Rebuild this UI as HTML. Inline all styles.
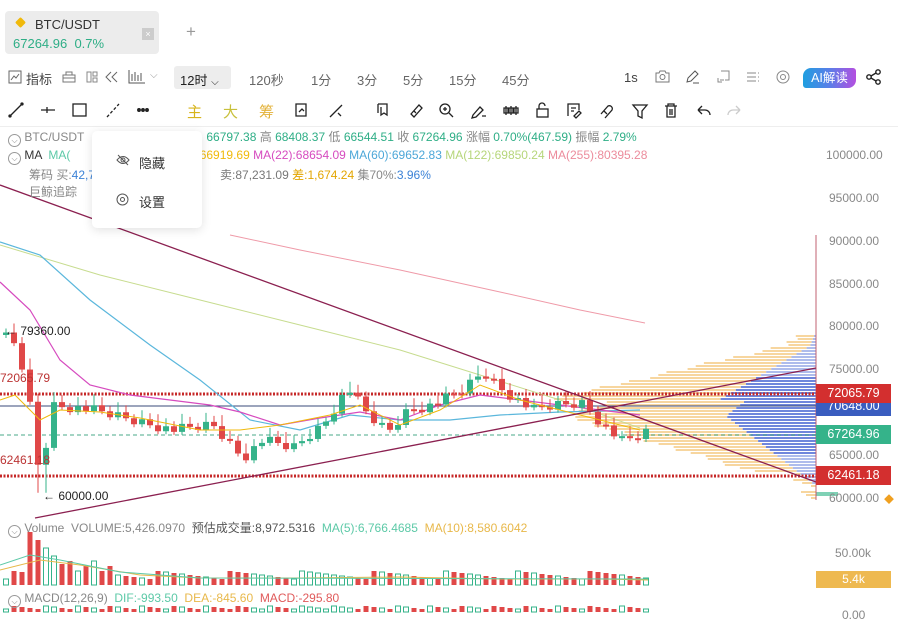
<!DOCTYPE html>
<html><head><meta charset="utf-8">
<style>
*{margin:0;padding:0;box-sizing:border-box}
body{width:898px;height:627px;overflow:hidden;background:#fff;font-family:"Liberation Sans","Noto Sans CJK SC",sans-serif;position:relative;color:#333}
.a{position:absolute;white-space:nowrap}
.tab{left:5px;top:11px;width:154px;height:43px;background:#ececec;border-radius:4px}
.t13{font-size:13px}
.g{color:#2eae86}.gr{color:#888}
.leg{font-size:12px;color:#888}
.lbl{position:absolute;left:816px;width:75px;height:19px;color:#fff;font-size:12.5px;line-height:19px;text-align:center}
.ax{position:absolute;left:826px;font-size:12px;color:#888}
.ci{display:inline-block;width:13px;height:13px;border:1px solid #999;border-radius:50%;vertical-align:-2px;font-size:8px;text-align:center;line-height:11px}
</style></head><body>
<div class="a tab"></div>
<div class="a" style="left:15px;top:17px;width:11px;height:11px;background:#f0b90b;transform:rotate(45deg) scale(.7);border-radius:2px"></div>
<div class="a t13" style="left:35px;top:17px;color:#333">BTC/USDT</div>
<div class="a t13 g" style="left:13px;top:36px">67264.96&nbsp; 0.7%</div>
<div class="a" style="left:142px;top:28px;width:12px;height:12px;background:#ccc;color:#fff;font-size:9px;text-align:center;line-height:12px">×</div>
<div class="a" style="left:186px;top:22px;font-size:17px;color:#999">+</div>

<svg class="a" style="left:8px;top:70px" width="14" height="14"><rect x="1" y="1" width="12" height="12" fill="none" stroke="#666"/><path d="M3 10l3-4 2 2 3-4" fill="none" stroke="#666"/></svg>
<div class="a t13" style="left:26px;top:69px;color:#444">指标</div>
<svg class="a" style="left:62px;top:71px" width="14" height="12"><path d="M1 4h12v7H1zM4 4V1h6v3M1 7h12" fill="none" stroke="#777"/></svg>
<svg class="a" style="left:86px;top:71px" width="12" height="12"><rect x="1" y="1" width="4" height="10" fill="none" stroke="#888"/><rect x="7" y="1" width="4" height="4" fill="none" stroke="#888"/><rect x="7" y="7" width="4" height="4" fill="none" stroke="#888"/></svg>
<svg class="a" style="left:105px;top:71px" width="14" height="12"><path d="M6 1L1 6l5 5M12 1L7 6l5 5" fill="none" stroke="#666"/></svg>
<svg class="a" style="left:128px;top:69px" width="18" height="15"><path d="M1 1v13h16M4 12V5M7 12V3M10 12V6M13 12V4" fill="none" stroke="#555"/></svg>
<div class="a" style="left:150px;top:70px;font-size:10px;color:#999">⌵</div>
<div class="a" style="left:174px;top:66px;width:57px;height:23px;background:#ededed;border-radius:3px"></div>
<div class="a t13" style="left:180px;top:70px;color:#222">12时 <span style="font-size:10px">⌵</span></div>
<div class="a t13" style="left:249px;top:70px;color:#666">120秒</div>
<div class="a t13" style="left:311px;top:70px;color:#666">1分</div>
<div class="a t13" style="left:357px;top:70px;color:#666">3分</div>
<div class="a t13" style="left:403px;top:70px;color:#666">5分</div>
<div class="a t13" style="left:449px;top:70px;color:#666">15分</div>
<div class="a t13" style="left:502px;top:70px;color:#666">45分</div>
<div class="a t13" style="left:624px;top:70px;color:#444">1s</div>
<svg class="a" style="left:655px;top:70px" width="15" height="13"><path d="M1 3h3l1-2h5l1 2h3v9H1z" fill="none" stroke="#777"/><circle cx="7.5" cy="7" r="2.5" fill="none" stroke="#777"/></svg>
<svg class="a" style="left:685px;top:70px" width="15" height="14"><path d="M2 12l1-4 7-7 3 3-7 7zM8 13h6" fill="none" stroke="#555"/></svg>
<svg class="a" style="left:717px;top:70px" width="13" height="14"><path d="M4 1h8v9H8M1 8v4h4M3 10h4" fill="none" stroke="#888"/></svg>
<svg class="a" style="left:746px;top:71px" width="14" height="12"><path d="M1 2h9M1 6h9M1 10h9M12 2h1M12 6h1M12 10h1" stroke="#888"/></svg>
<svg class="a" style="left:776px;top:70px" width="14" height="14"><circle cx="7" cy="7" r="6" fill="none" stroke="#888"/><circle cx="7" cy="7" r="2.5" fill="none" stroke="#888"/></svg>
<div class="a" style="left:803px;top:68px;width:53px;height:20px;border-radius:8px 3px 8px 3px;background:linear-gradient(90deg,#1f9fe0,#5a7ee8,#b44fe0);color:#fff;font-size:12.5px;line-height:20px;text-align:center">AI解读</div>
<svg class="a" style="left:866px;top:69px" width="16" height="16"><circle cx="12" cy="3" r="2.2" fill="none" stroke="#222" stroke-width="1.4"/><circle cx="3" cy="8" r="2.2" fill="none" stroke="#222" stroke-width="1.4"/><circle cx="12" cy="13" r="2.2" fill="none" stroke="#222" stroke-width="1.4"/><path d="M5 7l5-3M5 9l5 3" stroke="#222" stroke-width="1.4"/></svg>

<svg class="a" style="left:0;top:100px" width="898" height="22" fill="none" stroke="#222" stroke-width="1.3">
<path d="M10 16L22 4"/><circle cx="10" cy="16" r="1" fill="#222"/><circle cx="22" cy="4" r="1" fill="#222"/>
<path d="M41 10h14M47 7v6"/>
<rect x="73" y="4" width="13" height="12"/>
<path d="M107 17l12-13" stroke-dasharray="3 2"/>
<circle cx="139" cy="10" r="1.3" fill="#222"/><circle cx="143" cy="10" r="1.3" fill="#222"/><circle cx="147" cy="10" r="1.3" fill="#222"/>
<path d="M296 4h10v12h-10zM299 12l3-3 2 2" />
<path d="M330 17l12-12M338 13l3 3"/>
<path d="M378 4h9v11l-3-2-3 2V7M378 4v9"/>
<path d="M411 14l8-9 3 3-8 9zM414 11l2 2"/>
<circle cx="445" cy="9" r="5"/><path d="M449 13l4 4M443 9h4M445 7v4"/>
<path d="M473 15l7-8 3 3-7 7-4 1zM482 16h4"/>
<path d="M506 6v9M511 6v9M516 6v9M504 8h4v5h-4zM509 8h4v5h-4zM514 8h4v5h-4z"/>
<rect x="537" y="9" width="11" height="8"/><path d="M539 9V6a3 3 0 0 1 6 0"/>
<path d="M568 16V4h11v6M571 8h5M571 11h3M574 16l5-5 2 2-5 5z"/>
<path d="M601 14l7-8a3 3 0 0 1 4 4l-7 8M604 11l3 3"/>
<path d="M633 5h14l-5 6v7l-4-2v-5z"/>
<path d="M665 6h12M668 6V4h6v2M667 6v11h8V6M670 9v6M672 9v6"/>
<path d="M698 10h7a5 5 0 0 1 5 5M698 10l4-4M698 10l4 4"/>
<path d="M740 10h-7a5 5 0 0 0-5 5M740 10l-4-4M740 10l-4 4" stroke="#ccc"/>
</svg>
<div class="a" style="left:187px;top:101px;font-size:15px;color:#d7b41c">主</div>
<div class="a" style="left:223px;top:101px;font-size:15px;color:#c8c03b">大</div>
<div class="a" style="left:259px;top:101px;font-size:15px;color:#e3b23a">筹</div>
<div class="a" style="left:0;top:126px;width:898px;height:1px;background:#eee"></div>

<svg class="a" id="ch" style="left:0;top:0" width="898" height="627"></svg>

<div class="a leg" style="left:8px;top:130px;line-height:14px"><span class="ci">⌵</span> BTC/USDT<span style="margin-left:122px" class="g">66797.38</span> 高 <span class="g">68408.37</span> 低 <span class="g">66544.51</span> 收 <span class="g">67264.96</span> 涨幅 <span class="g">0.70%(467.59)</span> 振幅 <span class="g">2.79%</span></div>
<div class="a leg" style="left:8px;top:148px;line-height:14px"><span class="ci">⌵</span> <span style="color:#333">MA</span> &nbsp;<span style="color:#5cc9a7">MA(</span><span style="margin-left:126px;color:#f0b90b">:66919.69</span> <span style="color:#d64bbf">MA(22):68654.09</span> <span style="color:#4ca7d8">MA(60):69652.83</span> <span style="color:#b6d67a">MA(122):69850.24</span> <span style="color:#ec8c9c">MA(255):80395.28</span></div>
<div class="a leg" style="left:29px;top:166px">筹码 买:<span style="color:#3b82d6">42,7</span><span style="margin-left:125px;color:#777">卖:87,231.09</span> <span style="color:#e3a500">差:1,674.24</span> 集70%:<span style="color:#3b82d6">3.96%</span></div>
<div class="a leg" style="left:29px;top:183px">巨鲸追踪</div>

<div class="a" style="left:92px;top:131px;width:110px;height:97px;background:#fff;border-radius:5px;box-shadow:0 2px 10px rgba(0,0,0,.12)"></div>
<svg class="a" style="left:116px;top:154px" width="14" height="12"><path d="M1 6q6-7 12 0q-6 7-12 0z" fill="none" stroke="#555"/><circle cx="7" cy="6" r="2" fill="none" stroke="#555"/><path d="M2 1l10 10" stroke="#555"/></svg>
<div class="a t13" style="left:139px;top:153px;color:#333">隐藏</div>
<svg class="a" style="left:116px;top:193px" width="13" height="13"><circle cx="6.5" cy="6.5" r="5.5" fill="none" stroke="#555"/><circle cx="6.5" cy="6.5" r="2" fill="none" stroke="#555"/></svg>
<div class="a t13" style="left:139px;top:192px;color:#333">设置</div>

<div class="ax" style="top:148px">100000.00</div>
<div class="ax" style="left:829px;top:191px">95000.00</div>
<div class="ax" style="left:829px;top:234px">90000.00</div>
<div class="ax" style="left:829px;top:277px">85000.00</div>
<div class="ax" style="left:829px;top:319px">80000.00</div>
<div class="ax" style="left:829px;top:362px">75000.00</div>
<div class="ax" style="left:829px;top:448px">65000.00</div>
<div class="ax" style="left:829px;top:491px">60000.00</div>
<div class="lbl" style="top:397px;background:#3a5dbf">70648.00</div>
<div class="lbl" style="top:384px;background:#d32f2f">72065.79</div>
<div class="lbl" style="top:425px;background:#35b38a">67264.96</div>
<div class="lbl" style="top:466px;background:#d32f2f">62461.18</div>
<div class="a" style="left:884px;top:491px;color:#f0a020;font-size:10px">◆</div>
<div class="a" style="left:5px;top:324px;font-size:12px;color:#222">← 79360.00</div>
<div class="a" style="left:0;top:371px;font-size:12px;color:#b33">72065.79</div>
<div class="a" style="left:0;top:453px;font-size:12px;color:#b33">62461.18</div>
<div class="a" style="left:43px;top:489px;font-size:12px;color:#222">← 60000.00</div>

<div class="a leg" style="left:8px;top:519px"><span class="ci">⌵</span> Volume &nbsp;VOLUME:5,426.0970 &nbsp;<span style="color:#555">预估成交量:8,972.5316</span> &nbsp;<span style="color:#5cc9a7">MA(5):6,766.4685</span> &nbsp;<span style="color:#e8b84a">MA(10):8,580.6042</span></div>
<div class="ax" style="left:835px;top:546px">50.00k</div>
<div class="a" style="left:816px;top:571px;width:75px;height:17px;background:#eeb950;color:#fff;font-size:12px;text-align:center;line-height:17px">5.4k</div>
<div class="a leg" style="left:8px;top:591px"><span class="ci">⌵</span> MACD(12,26,9) &nbsp;<span style="color:#5cc9a7">DIF:-993.50</span> &nbsp;<span style="color:#e8b84a">DEA:-845.60</span> &nbsp;<span style="color:#e05a5a">MACD:-295.80</span></div>
<div class="ax" style="left:842px;top:608px">0.00</div>

<script>
(function(){
var s=document.getElementById('ch'),h='';
function L(x1,y1,x2,y2,c,w,d){h+='<line x1="'+x1+'" y1="'+y1+'" x2="'+x2+'" y2="'+y2+'" stroke="'+c+'" stroke-width="'+(w||1)+'"'+(d?' stroke-dasharray="'+d+'"':'')+'/>';}
function P(pts,c,w){h+='<polyline fill="none" stroke="'+c+'" stroke-width="'+(w||1.2)+'" points="'+pts+'"/>';}
for(var y=335;y<500;y+=3){var cc=Math.abs(y-415);var blen=Math.max(0,(1-cc/70))*90+(y<400&&y>330?(y-330)*0.4:0);var olen=blen*1.6+10+((y*7)%13);
 if(y>470)olen=(y*5)%20;
 h+='<rect x="'+(816-olen-blen)+'" y="'+y+'" width="'+olen+'" height="2" fill="#f6cf8e" opacity=".85"/>';
 h+='<rect x="'+(816-blen)+'" y="'+y+'" width="'+blen+'" height="2" fill="'+(cc<40?'#6f86dc':'#aebcec')+'"/>';}
h+='<rect x="816" y="492" width="22" height="4" fill="#7fd1b5"/>';
L(816,235,816,500,'#c06070',1);
L(0,394,816,394,'#c62828',3,'2 1.5');L(0,476,816,476,'#c62828',3,'2 1.5');
L(0,406,816,406,'#3a4a7a',1);L(0,435,816,435,'#4aa98a',1,'4 3');
P('230,235 300,250 400,270 500,292 580,310 645,323','#ef9aa8',1);
P('0,245 100,275 200,300 300,325 400,350 480,375 560,400 640,428','#c7dc8f',1);
P('0,242 40,255 90,300 150,345 200,380 250,420 300,430 350,415 400,420 450,420 500,415 560,412 640,410','#5bb7dc',1.2);
P('0,282 30,310 60,360 90,385 130,395 170,400 210,405 240,412 280,425 320,418 360,412 400,420 440,405 480,395 520,400 560,405 600,410 640,415','#d64bbf',1.2);
var k=[[0,335],[12,345],[25,385],[33,468],[41,455],[50,405],[90,410],[130,420],[170,430],[210,425],[240,458],[260,440],[290,448],[320,425],[345,388],[365,415],[385,432],[405,410],[430,405],[460,390],[480,372],[500,390],[530,410],[555,405],[580,403],[600,425],[620,442],[645,432]];
function yat(x){for(var i=1;i<k.length;i++)if(x<=k[i][0]){var a=k[i-1],b=k[i];return a[1]+(b[1]-a[1])*(x-a[0])/(b[0]-a[0]);}return 432;}
var prev=335;
for(var x=3,i=0;x<648;x+=8,i++){var c=yat(x)+((i*37)%11-5);var up=c<prev;var t0=Math.min(c,prev),b0=Math.max(c,prev);if(b0-t0<2)b0=t0+2;
 var col=up?'#35b38a':'#e04848';
 var bw=(x>30&&x<45)?25:0;
 L(x+3,t0-4-(i*13)%8,x+3,b0+3+(i*7)%7+bw,col,1);
 h+='<rect x="'+x+'" y="'+t0+'" width="6" height="'+(b0-t0)+'" fill="'+col+'"/>';
 var vh=6+(i*17)%9; if(x>20&&x<60)vh=20+(60-x); if(x>60&&x<110)vh=14+(i%3)*5;
 h+='<rect x="'+(x+0.5)+'" y="'+(585-vh)+'" width="5" height="'+vh+'" '+(up?'fill="none" stroke="#35b38a"':'fill="#e04848"')+'/>';
 var mh=3+(i*11)%4;h+='<rect x="'+(x+0.5)+'" y="'+(612-mh)+'" width="5" height="'+mh+'" '+(up?'fill="none" stroke="#35b38a"':'fill="#e04848"')+'/>';
 prev=c;}
P('0,400 15,395 40,420 60,410 100,412 140,418 200,430 240,430 280,425 330,415 360,405 400,425 440,410 480,385 520,400 560,410 600,420 640,430','#f0b90b',1);
P('0,570 40,560 80,565 140,575 200,578 300,578 400,577 500,579 600,579 648,580','#e8b84a',1);
P('0,565 30,555 60,560 120,572 200,578 648,579','#5cc9a7',1);
L(0,185,816,482,'#8b2050',1.3);L(35,518,816,368,'#8b2050',1.3);
s.innerHTML=h;
})();
</script>
</body></html>
